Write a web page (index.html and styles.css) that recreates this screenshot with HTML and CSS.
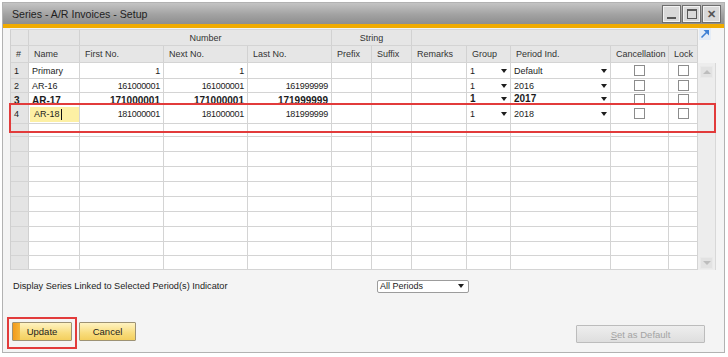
FILE: index.html
```html
<!DOCTYPE html>
<html lang="en">
<head>
    <meta charset="UTF-8">
    <title>Series - A/R Invoices - Setup</title>
    <link rel="stylesheet" href="styles.css">
</head>
<body>
    <div class="window">
        <div class="titlebar">
            <span class="title">Series - A/R Invoices - Setup</span>
            <div class="win-btns">
                <span class="win-btn"><i class="g-min"></i></span>
                <span class="win-btn"><i class="g-max"></i></span>
                <span class="win-btn g-close">&#x2715;</span>
            </div>
        </div>

        <div class="content">
            <div class="grid-area">
                <div class="grid">
                    <!-- header: group captions -->
                    <div class="row head head-top">
                        <span></span>
                        <span></span>
                        <span class="span3">Number</span>
                        <span class="span2">String</span>
                        <span class="span5"></span>
                    </div>
                    <div class="row head">
                        <span>#</span>
                        <span>Name</span>
                        <span>First No.</span>
                        <span>Next No.</span>
                        <span>Last No.</span>
                        <span>Prefix</span>
                        <span>Suffix</span>
                        <span>Remarks</span>
                        <span>Group</span>
                        <span>Period Ind.</span>
                        <span>Cancellation</span>
                        <span>Lock</span>
                    </div>

                    <div class="row h16">
                        <span class="no">1</span>
                        <span>Primary</span>
                        <span class="num">1</span>
                        <span class="num">1</span>
                        <span class="num"></span>
                        <span></span><span></span><span></span>
                        <span class="pick">1<i class="caret"></i></span>
                        <span class="pick">Default<i class="caret"></i></span>
                        <span class="chk"><i class="box"></i></span>
                        <span class="chk"><i class="box"></i></span>
                    </div>
                    <div class="row h14">
                        <span class="no">2</span>
                        <span>AR-16</span>
                        <span class="num">161000001</span>
                        <span class="num">161000001</span>
                        <span class="num">161999999</span>
                        <span></span><span></span><span></span>
                        <span class="pick">1<i class="caret"></i></span>
                        <span class="pick">2016<i class="caret"></i></span>
                        <span class="chk"><i class="box"></i></span>
                        <span class="chk"><i class="box"></i></span>
                    </div>
                    <!-- row 3 is cut off by the edit row below -->
                    <div class="row clipped">
                        <span class="no">3</span>
                        <span>AR-17</span>
                        <span class="num">171000001</span>
                        <span class="num">171000001</span>
                        <span class="num">171999999</span>
                        <span></span><span></span><span></span>
                        <span class="pick">1<i class="caret"></i></span>
                        <span class="pick">2017<i class="caret"></i></span>
                        <span class="chk"><i class="box"></i></span>
                        <span class="chk"><i class="box"></i></span>
                    </div>
                    <div class="row editing">
                        <span class="no">4</span>
                        <span class="edit-cell"><span class="edit">AR-18<i class="cursor"></i></span></span>
                        <span class="num">181000001</span>
                        <span class="num">181000001</span>
                        <span class="num">181999999</span>
                        <span></span><span></span><span></span>
                        <span class="pick">1<i class="caret"></i></span>
                        <span class="pick">2018<i class="caret"></i></span>
                        <span class="chk"><i class="box"></i></span>
                        <span class="chk"><i class="box"></i></span>
                    </div>

                    <div class="row h13"><span class="no"></span><span></span><span></span><span></span><span></span><span></span><span></span><span></span><span></span><span></span><span></span><span></span></div>
                    <div class="row"><span class="no"></span><span></span><span></span><span></span><span></span><span></span><span></span><span></span><span></span><span></span><span></span><span></span></div>
                    <div class="row"><span class="no"></span><span></span><span></span><span></span><span></span><span></span><span></span><span></span><span></span><span></span><span></span><span></span></div>
                    <div class="row"><span class="no"></span><span></span><span></span><span></span><span></span><span></span><span></span><span></span><span></span><span></span><span></span><span></span></div>
                    <div class="row"><span class="no"></span><span></span><span></span><span></span><span></span><span></span><span></span><span></span><span></span><span></span><span></span><span></span></div>
                    <div class="row"><span class="no"></span><span></span><span></span><span></span><span></span><span></span><span></span><span></span><span></span><span></span><span></span><span></span></div>
                    <div class="row"><span class="no"></span><span></span><span></span><span></span><span></span><span></span><span></span><span></span><span></span><span></span><span></span><span></span></div>
                    <div class="row"><span class="no"></span><span></span><span></span><span></span><span></span><span></span><span></span><span></span><span></span><span></span><span></span><span></span></div>
                    <div class="row h14"><span class="no"></span><span></span><span></span><span></span><span></span><span></span><span></span><span></span><span></span><span></span><span></span><span></span></div>
                    <div class="row h14"><span class="no"></span><span></span><span></span><span></span><span></span><span></span><span></span><span></span><span></span><span></span><span></span><span></span></div>
                </div>

                <div class="side">
                    <div class="corner">
                        <svg width="12" height="12" viewBox="0 0 12 12">
                            <rect x="0" y="0" width="12" height="12" fill="#e4ecf6"/>
                            <path d="M2.5 9.5 L9 3" stroke="#3f80d4" stroke-width="1.6"/>
                            <path d="M4.5 2 H10 V7.5 Z" fill="#3f80d4"/>
                        </svg>
                    </div>
                    <div class="scrollbar">
                        <span class="sb-btn"><i class="sb-up"></i></span>
                        <span class="sb-btn"><i class="sb-down"></i></span>
                    </div>
                </div>

                <div class="mark-row"></div>
            </div>

            <div class="filter">
                <span class="filter-label">Display Series Linked to Selected Period(s) Indicator</span>
                <span class="select">All Periods<i class="caret"></i></span>
            </div>

            <div class="actions">
                <div class="action-left">
                    <span class="mark-btn"><button class="btn btn-main">Update</button></span>
                    <button class="btn btn-cancel">Cancel</button>
                </div>
                <button class="btn btn-off"><u>S</u>et as Default</button>
            </div>
        </div>
    </div>
</body>
</html>
```

FILE: styles.css
```css
/* Base */
* {
    box-sizing: border-box;
}

body {
    margin: 0;
    background: #ffffff;
    font-family: "Liberation Sans", Arial, sans-serif;
    color: #1c1c1c;
}

i {
    font-style: normal;
}

/* Window frame */
.window {
    margin: 2px;
    width: 723px;
    height: 351px;
    border: 1px solid #b2b2b2;
    background: #f4f4f4;
    display: flex;
    flex-direction: column;
}

.titlebar {
    height: 25px;
    background: linear-gradient(#c4c4c4, #a2a2a2 55%, #8e8e8e);
    border-bottom: 4px solid #f0ab00;
    display: flex;
    justify-content: space-between;
    align-items: center;
    padding: 1px 3px 0 9px;
}

.title {
    font-size: 10.6px;
    color: #1e1e1e;
}

.win-btns {
    display: flex;
    gap: 1px;
}

.win-btn {
    width: 19px;
    height: 18px;
    border: 1px solid #6e6e6e;
    box-shadow: inset 0 0 0 1px #f2f2f2;
    background: #d9d9d9;
    display: flex;
    justify-content: center;
    align-items: center;
    color: #555;
}

.g-min {
    width: 9px;
    height: 2px;
    background: #585858;
    margin-top: 8px;
}

.g-max {
    width: 10px;
    height: 10px;
    border: 1px solid #585858;
    border-top-width: 2px;
}

.g-close {
    font-size: 11px;
    font-weight: bold;
}

/* Content */
.content {
    padding: 1px 8px 0 7px;
    display: flex;
    flex-direction: column;
}

.grid-area {
    position: relative;
    display: flex;
}

.grid {
    width: 689px;
    border-left: 1px solid #cfcfcf;
    border-top: 1px solid #d6d6d6;
    font-size: 9px;
}

.row {
    display: grid;
    grid-template-columns: 18px 51px 84px 84px 84px 40px 40px 55px 44px 100px 58px 29px;
    height: 15px;
    border-bottom: 1px solid #d4d4d4;
    background: #ffffff;
}

.row > span {
    border-right: 1px solid #d4d4d4;
    display: flex;
    align-items: center;
    padding: 0 3px;
    white-space: nowrap;
    overflow: hidden;
}

.row > .no {
    background: #e4e4e4;
    border-right-color: #d0d0d0;
}

.row > .num {
    justify-content: flex-end;
    letter-spacing: -0.3px;
}

.row > .pick {
    justify-content: space-between;
    padding: 0 3px;
}

.row > .chk {
    justify-content: center;
}

.h16 { height: 16px; }
.h14 { height: 14px; }
.h13 { height: 13px; }

/* Header */
.head {
    height: 17px;
    background: #e6e6e6;
    color: #333;
}

.head > span {
    padding: 0 5px;
    border-right-color: #d2d2d2;
}

.head-top {
    height: 16px;
}

.head-top > span {
    justify-content: center;
}

.span3 { grid-column: span 3; }
.span2 { grid-column: span 2; }
.span5 { grid-column: span 5; }

.caret {
    width: 0;
    height: 0;
    border-left: 3px solid transparent;
    border-right: 3px solid transparent;
    border-top: 4px solid #1e1e1e;
}

.box {
    width: 11px;
    height: 11px;
    border: 1px solid #8c8c8c;
    background: #fff;
}

/* Row 3 is drawn bold and cut off */
.clipped {
    height: 11px;
    font-size: 10px;
    font-weight: bold;
    overflow: hidden;
}

.clipped > span {
    align-items: flex-start;
    padding-top: 2px;
    line-height: 11px;
}

.clipped > .pick {
    align-items: flex-start;
}

.clipped > .pick .caret {
    margin-top: 4px;
}

.clipped > .num {
    letter-spacing: 0;
}

.clipped > .chk {
    padding-top: 1px;
}

.editing {
    height: 20px;
}

.row > .edit-cell {
    padding: 0 0 0 1px;
}

.edit {
    width: 100%;
    height: 15px;
    margin-top: 1px;
    background: #fdf0a4;
    padding-left: 4px;
    display: flex;
    align-items: center;
}

.cursor {
    width: 1px;
    height: 11px;
    background: #111;
    margin-left: 1px;
}

/* Right side of the grid */
.side {
    width: 18px;
    display: flex;
    flex-direction: column;
    margin-top: -1px;
}

.corner {
    height: 35px;
    padding-left: 1px;
}

.corner svg {
    display: block;
}

.scrollbar {
    height: 207px;
    background: #ededed;
    border-right: 1px solid #d8d8d8;
    display: flex;
    flex-direction: column;
    justify-content: space-between;
    padding: 3px 2px 1px 2px;
}

.sb-btn {
    height: 12px;
    background: #e2e2e2;
    border: 1px solid #e9e9e9;
    display: flex;
    justify-content: center;
    align-items: center;
}

.sb-up {
    border-left: 4px solid transparent;
    border-right: 4px solid transparent;
    border-bottom: 4px solid #bdbdbd;
}

.sb-down {
    border-left: 4px solid transparent;
    border-right: 4px solid transparent;
    border-top: 4px solid #bdbdbd;
}

/* Red annotation boxes */
.mark-row {
    position: absolute;
    left: -1px;
    top: 74px;
    width: 707px;
    height: 30px;
    border: 2px solid #e23b3b;
}

.mark-btn {
    display: inline-flex;
    border: 2px solid #e23b3b;
    padding: 3px 3px 6px 3px;
}

/* Filter line */
.filter {
    margin-top: 9px;
    height: 14px;
    display: flex;
    align-items: center;
    padding-left: 3px;
    font-size: 9.2px;
}

.filter-label {
    width: 364px;
}

.select {
    width: 92px;
    height: 13px;
    border: 1px solid #9c9c9c;
    border-radius: 2px;
    background: #fff;
    display: flex;
    justify-content: space-between;
    align-items: center;
    padding: 0 4px 0 2px;
    font-size: 9px;
}

/* Buttons */
.actions {
    margin: 24px 11px 0 -3px;
    display: flex;
    justify-content: space-between;
    align-items: flex-start;
}

.action-left {
    display: flex;
    align-items: flex-start;
    gap: 2px;
}

.btn {
    font-family: "Liberation Sans", Arial, sans-serif;
    font-size: 9.5px;
    color: #1c1c1c;
    height: 19px;
    padding: 0;
    border: 1px solid #9d9274;
    border-radius: 1px;
    background: linear-gradient(#fff3c2, #f8dc7c 60%, #f3cf5e);
}

.btn-main {
    width: 60px;
    background: linear-gradient(to right, #f29a1c, #f6b53a 7px, transparent 7px),
                linear-gradient(#fff3c2, #f8dc7c 60%, #f3cf5e);
}

.btn-cancel {
    width: 57px;
    margin-top: 5px;
}

.btn-off {
    width: 129px;
    height: 18px;
    margin-top: 8px;
    border-color: #bcbcbc;
    background: linear-gradient(#eeeeee, #dedede);
    color: #a3a3a3;
}

.btn-off u {
    text-decoration: underline;
}
```
